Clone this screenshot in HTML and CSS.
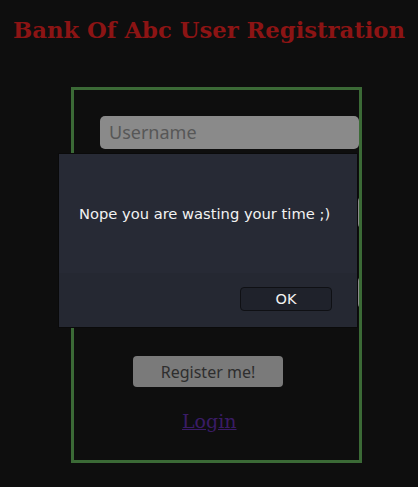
FILE: index.html
```html
<!DOCTYPE html>
<html>
<head>
<meta charset="utf-8">
<link rel="stylesheet" href="styles.css">
</head>
<body>
<h1 class="title">Bank Of Abc User Registration</h1>
<div class="box">
  <div class="field">Username</div>
  <div class="field"></div>
  <div class="field"></div>
  <div class="btn">Register me!</div>
  <a class="login" href="#">Login</a>
</div>
<div class="dialog">
  <div class="dialog-body">Nope you are wasting your time ;)</div>
  <div class="dialog-foot"><div class="ok">OK</div></div>
</div>
</body>
</html>
```
FILE: styles.css
```css
html, body { margin: 0; padding: 0; }
body {
  background: #0e0e0e;
  width: 418px;
  height: 487px;
  overflow: hidden;
  position: relative;
}
.title {
  margin: 0;
  padding-top: 16px;
  height: 71px;
  box-sizing: border-box;
  font-family: "DejaVu Serif", serif;
  font-weight: bold;
  font-size: 22.7px;
  line-height: 28px;
  color: #8c1414;
  text-align: center;
}
.box {
  margin-left: 71px;
  margin-top: 16px;
  width: 291px;
  height: 376px;
  box-sizing: border-box;
  border: 3px solid #3b6a36;
  display: flex;
  flex-direction: column;
  padding-top: 26px;
}
.field {
  margin-left: 26px;
  width: 259px;
  height: 33px;
  box-sizing: border-box;
  background: #8a8a8a;
  border-radius: 5px;
  margin-bottom: 47px;
  font-family: "Noto Sans", sans-serif;
  font-size: 18px;
  line-height: 33px;
  padding-left: 9px;
  color: #575757;
}
.btn {
  margin-left: 59px;
  width: 150px;
  height: 31px;
  box-sizing: border-box;
  background: #7a7a7a;
  border-radius: 4px;
  font-family: "Noto Sans", sans-serif;
  font-size: 16px;
  line-height: 32px;
  text-align: center;
  color: #2e2e2e;
}
.login {
  align-self: flex-start;
  margin-left: 108px;
  margin-top: 20px;
  font-family: "DejaVu Serif", serif;
  font-size: 19px;
  line-height: 28px;
  color: #3a1c66;
}
.dialog {
  position: absolute;
  left: 58px;
  top: 153px;
  width: 300px;
  height: 175px;
  box-sizing: border-box;
  border: 1px solid #0a0a0a;
  background: #272a35;
  display: flex;
  flex-direction: column;
}
.dialog-body {
  height: 119px;
  box-sizing: border-box;
  padding-top: 51px;
  padding-left: 20px;
  font-family: "DejaVu Sans", sans-serif;
  font-size: 14.7px;
  line-height: 18px;
  color: #f2f2f2;
}
.dialog-foot {
  flex: 1;
  background: #252832;
  display: flex;
  justify-content: flex-end;
  padding: 14px 25px 0 0;
}
.ok {
  width: 92px;
  height: 24px;
  box-sizing: border-box;
  border: 1px solid #0f1014;
  border-radius: 4px;
  background: #1f222b;
  font-family: "DejaVu Sans", sans-serif;
  font-size: 14.5px;
  line-height: 22px;
  text-align: center;
  color: #f2f2f2;
}
```
